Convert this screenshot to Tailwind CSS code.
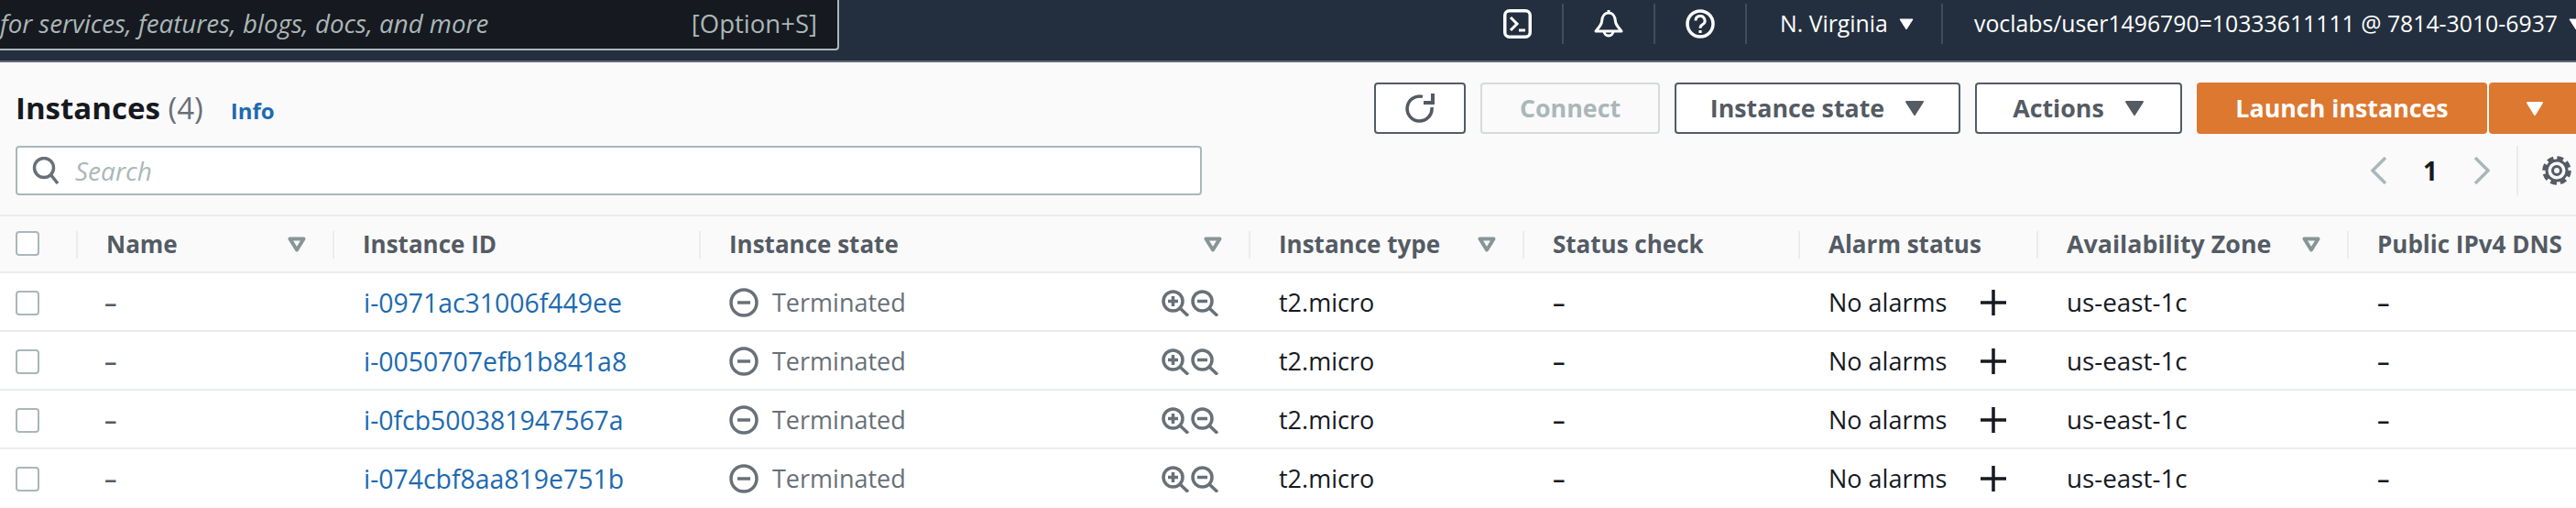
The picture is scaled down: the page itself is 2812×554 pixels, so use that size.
<!DOCTYPE html>
<html>
<head>
<meta charset="utf-8">
<script src="https://cdn.jsdelivr.net/npm/@tailwindcss/browser@4"></script>
</head>
<body class="w-[2812px] h-[554px] overflow-hidden bg-[#fafafa] font-['Open_Sans',sans-serif]">
<svg class="hidden">
  <symbol id="ended" viewBox="0 0 32 32"><circle cx="16" cy="16" r="14" fill="none" stroke="#687078" stroke-width="3.5"/><path d="M9 16h14" stroke="#687078" stroke-width="3.5"/></symbol>
  <symbol id="zin" viewBox="0 0 31 29"><circle cx="12.5" cy="12.5" r="10.5" fill="none" stroke="#687078" stroke-width="3.5"/><path d="M7 12.5h11M12.5 7v11M20 20l9 8.5" fill="none" stroke="#687078" stroke-width="3.5"/></symbol>
  <symbol id="zout" viewBox="0 0 31 29"><circle cx="12.5" cy="12.5" r="10.5" fill="none" stroke="#687078" stroke-width="3.5"/><path d="M7 12.5h11M20 20l9 8.5" fill="none" stroke="#687078" stroke-width="3.5"/></symbol>
  <symbol id="plus" viewBox="0 0 28 28"><path d="M0 14h28M14 0v28" fill="none" stroke="#16191f" stroke-width="3.5"/></symbol>
  <symbol id="sort" viewBox="0 0 20 17"><path d="M2.500 2.500h15L10 14.500z" fill="none" stroke="#879596" stroke-width="4" stroke-linejoin="round"/></symbol>
</svg>

<header class="relative h-[68px] bg-[#232f3e] border-b-2 border-[#5f6b7a] flex items-start text-white text-[24.8px] overflow-hidden">
  <div class="w-[916px] h-[56px] shrink-0 bg-[#16191f] border-r-2 border-b-2 border-[#aab7b8] rounded-br flex items-center justify-between pr-[22px] -mt-px text-[#aab7b8]">
    <span class="italic text-[27.7px] whitespace-nowrap">for services, features, blogs, docs, and more</span>
    <span class="text-[27.5px] whitespace-nowrap">[Option+S]</span>
  </div>
  <div class="shrink-0 ml-[691px] w-[100px] h-[44px] mt-[4px] border-r-2 border-[#414d5c] flex items-center justify-center">
    <svg width="31" height="32" viewBox="0 0 31 32"><rect x="1.75" y="1.75" width="27.5" height="28.5" rx="5" fill="none" stroke="#fff" stroke-width="3.5"/><path d="M8 9l7 7-7 7" fill="none" stroke="#fff" stroke-width="3"/><path d="M17 23h7" stroke="#fff" stroke-width="3"/></svg>
  </div>
  <div class="shrink-0 w-[100px] h-[44px] mt-[4px] border-r-2 border-[#414d5c] flex items-center justify-center">
    <svg width="32" height="32" viewBox="0 0 32 32"><path d="M16 1v3M16 4C10 4 9 9 8.5 13.500C8 18 4 21 2 24H30C28 21 24 18 23.500 13.500C23 9 22 4 16 4ZM11 24a5 5 0 0 0 10 0" fill="none" stroke="#fff" stroke-width="3" stroke-linejoin="round"/></svg>
  </div>
  <div class="shrink-0 w-[100px] h-[44px] mt-[4px] border-r-2 border-[#414d5c] flex items-center justify-center">
    <svg width="32" height="32" viewBox="0 0 32 32"><circle cx="16" cy="16" r="14" fill="none" stroke="#fff" stroke-width="3.5"/><path d="M11 12.500a5 5 0 1 1 7.500 4.300c-1.800 1.100-2.500 2-2.500 4" fill="none" stroke="#fff" stroke-width="3"/><path d="M14.400 23h3.200v3h-3.200z" fill="#fff"/></svg>
  </div>
  <div class="shrink-0 w-[214px] h-[44px] mt-[4px] border-r-2 border-[#414d5c] flex items-center pl-[36px] gap-[12px] whitespace-nowrap">
    <span>N. Virginia</span>
    <svg width="16" height="13" viewBox="0 0 16 13"><path d="M1 1h14L8 12z" fill="#fff" stroke="#fff" stroke-linejoin="round"/></svg>
  </div>
  <div class="shrink-0 h-[44px] mt-[4px] flex items-center pl-[34px] gap-[12px] whitespace-nowrap">
    <span>voclabs/user1496790=10333611111 @ 7814-3010-6937</span>
    <svg width="16" height="13" viewBox="0 0 16 13" class="shrink-0"><path d="M1 1h14L8 12z" fill="#fff" stroke="#fff" stroke-linejoin="round"/></svg>
  </div>
</header>

<main>
  <section class="h-[166px] pl-[17px] pt-[22px]">
    <div class="flex items-center h-[56px]">
      <h1 class="text-[#16191f] font-bold text-[33px] whitespace-nowrap">Instances <span class="font-normal text-[#687078]">(4)</span></h1>
      <a class="ml-[30px] mt-[6px] text-[#1d6ab1] font-bold text-[24px]">Info</a>
      <div class="ml-auto flex gap-[16px] shrink-0 font-bold text-[26.8px] text-[#545b64] -mr-[5px]">
        <button class="w-[100px] h-[56px] bg-white border-2 border-[#545b64] rounded flex items-center justify-center">
          <svg width="34" height="32" viewBox="0 0 34 32"><path d="M20 3.400A13.500 13.500 0 1 0 30 15" fill="none" stroke="#545b64" stroke-width="3.500"/><path d="M31 0V10H21" fill="none" stroke="#545b64" stroke-width="4"/></svg>
        </button>
        <button class="w-[196px] h-[56px] bg-[#fafafa] border-2 border-[#d5dbdb] rounded text-[#aab7b8]">Connect</button>
        <button class="w-[312px] h-[56px] bg-white border-2 border-[#545b64] rounded flex items-center justify-center gap-[22px]">Instance state
          <svg width="22" height="18" viewBox="0 0 22 18"><path d="M2 2h18L11 16z" fill="#545b64" stroke="#545b64" stroke-width="2" stroke-linejoin="round"/></svg>
        </button>
        <button class="w-[226px] h-[56px] bg-white border-2 border-[#545b64] rounded flex items-center justify-center gap-[22px]">Actions
          <svg width="22" height="18" viewBox="0 0 22 18"><path d="M2 2h18L11 16z" fill="#545b64" stroke="#545b64" stroke-width="2" stroke-linejoin="round"/></svg>
        </button>
        <div class="flex gap-[2px]">
          <button class="w-[317px] h-[56px] bg-[#dd7831] rounded text-white">Launch instances</button>
          <button class="w-[100px] h-[56px] bg-[#dd7831] rounded flex items-center justify-center">
            <svg width="20" height="17" viewBox="0 0 20 17"><path d="M2 2h16L10 15z" fill="#fff" stroke="#fff" stroke-width="2" stroke-linejoin="round"/></svg>
          </button>
        </div>
      </div>
    </div>
    <div class="flex items-center mt-[13px] h-[54px]">
      <div class="w-[1295px] h-[54px] bg-white border-2 border-[#aab7b8] rounded flex items-center pl-[16px]">
        <svg width="30" height="30" viewBox="0 0 30 30"><circle cx="13" cy="12" r="10.500" fill="none" stroke="#687078" stroke-width="3.500"/><path d="M20 19l8 10" stroke="#687078" stroke-width="3.500"/></svg>
        <span class="ml-[17px] italic text-[28px] text-[#aab7b8]">Search</span>
      </div>
      <div class="ml-auto flex items-center h-[54px] text-[#16191f] font-bold text-[28px]">
        <svg width="18" height="30" viewBox="0 0 18 30"><path d="M16 1L2 15l14 14" fill="none" stroke="#aab7b8" stroke-width="3.500"/></svg>
        <span class="w-[94px] text-center">1</span>
        <svg width="18" height="30" viewBox="0 0 18 30"><path d="M2 1l14 14L2 29" fill="none" stroke="#aab7b8" stroke-width="3.500"/></svg>
        <div class="ml-[29px] w-[65px] h-[54px] border-l-2 border-[#eaeded] flex items-center pl-[26px]">
          <svg width="32" height="32" viewBox="0 0 32 32" class="shrink-0"><circle cx="16" cy="16" r="13.500" fill="none" stroke="#545b64" stroke-width="4.500" stroke-dasharray="6.600 4"/><circle cx="16" cy="16" r="11" fill="none" stroke="#545b64" stroke-width="3"/><circle cx="16" cy="16" r="4.500" fill="none" stroke="#545b64" stroke-width="3"/></svg>
        </div>
      </div>
    </div>
  </section>

  <section class="border-t-2 border-[#eaeded]">
    <div class="grid grid-cols-[83px_280px_400px_600px_299px_301px_260px_339px_250px] h-[60px] pt-[16px] items-start text-[26px] font-bold text-[#545b64] whitespace-nowrap">
      <div class="pl-[17px]"><div class="w-[26px] h-[27px] bg-white border-2 border-[#aab7b8] rounded"></div></div>
      <div class="h-[30px] pb-[2px] border-l-2 border-[#eaeded] pl-[31px] pr-[29px] flex items-center justify-between">Name<svg width="20" height="17"><use href="#sort"/></svg></div>
      <div class="h-[30px] pb-[2px] border-l-2 border-[#eaeded] pl-[31px] flex items-center">Instance ID</div>
      <div class="h-[30px] pb-[2px] border-l-2 border-[#eaeded] pl-[31px] pr-[29px] flex items-center justify-between">Instance state<svg width="20" height="17"><use href="#sort"/></svg></div>
      <div class="h-[30px] pb-[2px] border-l-2 border-[#eaeded] pl-[31px] pr-[29px] flex items-center justify-between">Instance type<svg width="20" height="17"><use href="#sort"/></svg></div>
      <div class="h-[30px] pb-[2px] border-l-2 border-[#eaeded] pl-[31px] flex items-center">Status check</div>
      <div class="h-[30px] pb-[2px] border-l-2 border-[#eaeded] pl-[31px] flex items-center">Alarm status</div>
      <div class="h-[30px] pb-[2px] border-l-2 border-[#eaeded] pl-[31px] pr-[29px] flex items-center justify-between"><span class="text-[26.8px]">Availability Zone</span><svg width="20" height="17"><use href="#sort"/></svg></div>
      <div class="h-[30px] pb-[2px] border-l-2 border-[#eaeded] pl-[31px] flex items-center">Public IPv4 DNS</div>
    </div>

    <div class="grid grid-cols-[83px_280px_400px_600px_299px_301px_260px_339px_250px] h-[64px] pt-[2px] items-center bg-white border-t-2 border-[#eaeded] text-[27px] text-[#16191f] whitespace-nowrap">
      <div class="pl-[17px]"><div class="w-[26px] h-[27px] border-2 border-[#aab7b8] rounded"></div></div>
      <div class="pl-[31px] font-semibold text-[#545b64]">–</div>
      <div class="pl-[34px] text-[28.4px] text-[#1d6ab1]">i-0971ac31006f449ee</div>
      <div class="pl-[33px] pr-[32px] flex items-center text-[#687078]"><svg width="32" height="32"><use href="#ended"/></svg><span class="ml-[15px]">Terminated</span><svg width="31" height="29" class="ml-auto"><use href="#zin"/></svg><svg width="31" height="29" class="ml-[1px]"><use href="#zout"/></svg></div>
      <div class="pl-[33px]">t2.micro</div>
      <div class="pl-[33px] font-semibold">–</div>
      <div class="pl-[33px] flex items-center">No alarms<svg width="28" height="28" class="ml-[37px]"><use href="#plus"/></svg></div>
      <div class="pl-[33px] text-[27.8px]">us-east-1c</div>
      <div class="pl-[33px] font-semibold">–</div>
    </div>
    <div class="grid grid-cols-[83px_280px_400px_600px_299px_301px_260px_339px_250px] h-[64px] pt-[2px] items-center bg-white border-t-2 border-[#eaeded] text-[27px] text-[#16191f] whitespace-nowrap">
      <div class="pl-[17px]"><div class="w-[26px] h-[27px] border-2 border-[#aab7b8] rounded"></div></div>
      <div class="pl-[31px] font-semibold text-[#545b64]">–</div>
      <div class="pl-[34px] text-[28.4px] text-[#1d6ab1]">i-0050707efb1b841a8</div>
      <div class="pl-[33px] pr-[32px] flex items-center text-[#687078]"><svg width="32" height="32"><use href="#ended"/></svg><span class="ml-[15px]">Terminated</span><svg width="31" height="29" class="ml-auto"><use href="#zin"/></svg><svg width="31" height="29" class="ml-[1px]"><use href="#zout"/></svg></div>
      <div class="pl-[33px]">t2.micro</div>
      <div class="pl-[33px] font-semibold">–</div>
      <div class="pl-[33px] flex items-center">No alarms<svg width="28" height="28" class="ml-[37px]"><use href="#plus"/></svg></div>
      <div class="pl-[33px] text-[27.8px]">us-east-1c</div>
      <div class="pl-[33px] font-semibold">–</div>
    </div>
    <div class="grid grid-cols-[83px_280px_400px_600px_299px_301px_260px_339px_250px] h-[64px] pt-[2px] items-center bg-white border-t-2 border-[#eaeded] text-[27px] text-[#16191f] whitespace-nowrap">
      <div class="pl-[17px]"><div class="w-[26px] h-[27px] border-2 border-[#aab7b8] rounded"></div></div>
      <div class="pl-[31px] font-semibold text-[#545b64]">–</div>
      <div class="pl-[34px] text-[28.4px] text-[#1d6ab1]">i-0fcb500381947567a</div>
      <div class="pl-[33px] pr-[32px] flex items-center text-[#687078]"><svg width="32" height="32"><use href="#ended"/></svg><span class="ml-[15px]">Terminated</span><svg width="31" height="29" class="ml-auto"><use href="#zin"/></svg><svg width="31" height="29" class="ml-[1px]"><use href="#zout"/></svg></div>
      <div class="pl-[33px]">t2.micro</div>
      <div class="pl-[33px] font-semibold">–</div>
      <div class="pl-[33px] flex items-center">No alarms<svg width="28" height="28" class="ml-[37px]"><use href="#plus"/></svg></div>
      <div class="pl-[33px] text-[27.8px]">us-east-1c</div>
      <div class="pl-[33px] font-semibold">–</div>
    </div>
    <div class="grid grid-cols-[83px_280px_400px_600px_299px_301px_260px_339px_250px] h-[64px] pt-[2px] items-center bg-white border-t-2 border-[#eaeded] text-[27px] text-[#16191f] whitespace-nowrap">
      <div class="pl-[17px]"><div class="w-[26px] h-[27px] border-2 border-[#aab7b8] rounded"></div></div>
      <div class="pl-[31px] font-semibold text-[#545b64]">–</div>
      <div class="pl-[34px] text-[28.4px] text-[#1d6ab1]">i-074cbf8aa819e751b</div>
      <div class="pl-[33px] pr-[32px] flex items-center text-[#687078]"><svg width="32" height="32"><use href="#ended"/></svg><span class="ml-[15px]">Terminated</span><svg width="31" height="29" class="ml-auto"><use href="#zin"/></svg><svg width="31" height="29" class="ml-[1px]"><use href="#zout"/></svg></div>
      <div class="pl-[33px]">t2.micro</div>
      <div class="pl-[33px] font-semibold">–</div>
      <div class="pl-[33px] flex items-center">No alarms<svg width="28" height="28" class="ml-[37px]"><use href="#plus"/></svg></div>
      <div class="pl-[33px] text-[27.8px]">us-east-1c</div>
      <div class="pl-[33px] font-semibold">–</div>
    </div>
  </section>
</main>
</body>
</html>
